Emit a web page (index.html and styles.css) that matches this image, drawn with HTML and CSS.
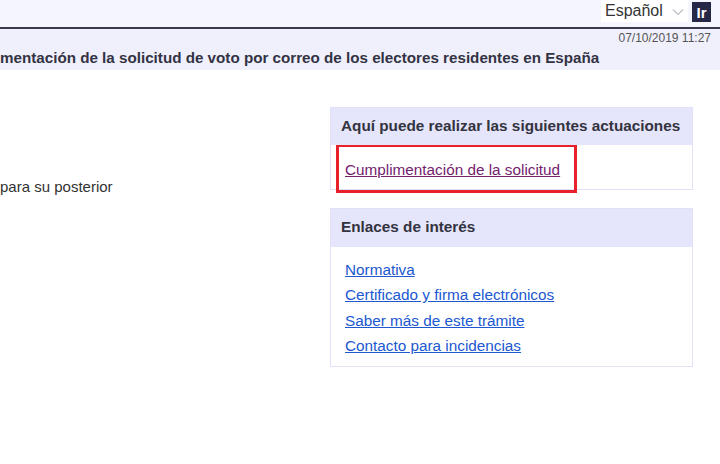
FILE: index.html
```html
<!DOCTYPE html>
<html lang="es">
<head>
<meta charset="utf-8">
<link rel="stylesheet" href="styles.css">
</head>
<body>
<div class="topbar">
  <div class="lang">
    <span class="lang-label">Español</span>
    <svg class="chev" width="12" height="8" viewBox="0 0 12 8"><path d="M1 1.5 L6 6.5 L11 1.5" fill="none" stroke="#8a8a9a" stroke-width="1"/></svg>
  </div>
  <button class="go">Ir</button>
</div>
<div class="header">
  <div class="date">07/10/2019 11:27</div>
  <h1 class="title">mentación de la solicitud de voto por correo de los electores residentes en España</h1>
</div>
<div class="main">
  <div class="left">
    <p class="text">para su posterior</p>
  </div>
  <div class="right">
    <section class="panel">
      <div class="panel-head">Aquí puede realizar las siguientes actuaciones</div>
      <div class="panel-body first">
        <div class="highlight"><a class="link visited" href="#">Cumplimentación de la solicitud</a></div>
      </div>
    </section>
    <section class="panel">
      <div class="panel-head">Enlaces de interés</div>
      <div class="panel-body links">
        <a class="link" href="#">Normativa</a>
        <a class="link" href="#">Certificado y firma electrónicos</a>
        <a class="link" href="#">Saber más de este trámite</a>
        <a class="link" href="#">Contacto para incidencias</a>
      </div>
    </section>
  </div>
</div>
</body>
</html>
```
FILE: styles.css
```css
html, body {
  margin: 0;
  padding: 0;
  background: #ffffff;
  font-family: "Liberation Sans", Arial, sans-serif;
  width: 720px;
  height: 464px;
  overflow: hidden;
}
.topbar {
  height: 27px;
  background: #f5f5fd;
  border-bottom: 2px solid #3a3a4e;
  display: flex;
  justify-content: flex-end;
  align-items: flex-start;
  padding-right: 9px;
  gap: 4px;
}
.lang {
  background: #ffffff;
  width: 87px;
  height: 22px;
  display: flex;
  align-items: center;
  box-sizing: border-box;
  padding-left: 4px;
  justify-content: space-between;
  padding-right: 4px;
}
.lang-label {
  font-size: 16px;
  color: #333333;
}
.chev { margin-top: 1px; }
.go {
  margin-top: 2px;
  width: 19px;
  height: 20px;
  background: #262646;
  color: #ffffff;
  border: none;
  padding: 0;
  font-family: "Liberation Sans", Arial, sans-serif;
  font-size: 15px;
  font-weight: bold;
}
.header {
  background: #f0f0fc;
  padding: 2px 9px 8px 0;
  height: 31px;
}
.date {
  text-align: right;
  font-size: 12px;
  color: #555555;
}
.title {
  margin: 4px 0 0 0;
  font-size: 15.2px;
  font-weight: bold;
  color: #333344;
  white-space: nowrap;
}
.main {
  display: flex;
  padding-top: 37px;
}
.left {
  flex: 1;
}
.text {
  margin: 71px 0 0 0;
  font-size: 15px;
  color: #333333;
}
.right {
  width: 363px;
  margin-right: 27px;
  display: flex;
  flex-direction: column;
  gap: 18px;
}
.panel {
  border: 1px solid #e0e0f6;
}
.panel-head {
  background: #e5e5fb;
  height: 38px;
  box-sizing: border-box;
  padding: 0 0 2px 10px;
  display: flex;
  align-items: center;
  font-size: 15.3px;
  font-weight: bold;
  color: #333340;
}
.panel-body {
  background: #ffffff;
}
.panel-body.first {
  height: 44px;
  padding-left: 5px;
}
.highlight {
  border: 3px solid #e8202a;
  border-top-width: 2px;
  box-sizing: border-box;
  padding: 14px 0 0 6px;
  position: relative;
  z-index: 1;
  margin-top: -1px;
  height: 48px;
  width: 241px;
}
.link {
  font-size: 15.3px;
  color: #2058d0;
  text-decoration: underline;
  line-height: 25.3px;
}
.link.visited {
  color: #74216e;
  line-height: 18px;
}
.links {
  display: flex;
  flex-direction: column;
  align-items: flex-start;
  padding: 10px 0 8px 14px;
}
```
